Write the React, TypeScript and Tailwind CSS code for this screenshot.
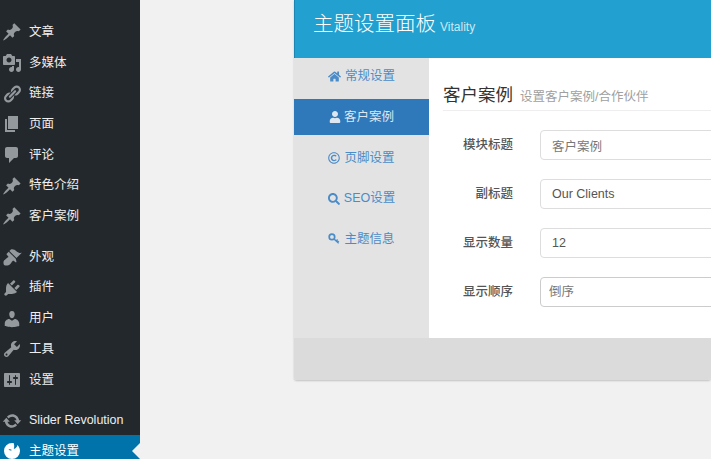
import { FaHome, FaUser, FaRegCopyright, FaSearch } from "react-icons/fa"

const pin = "M10.44 3.02l1.82-1.82 6.36 6.35-1.83 1.82c-1.05-.68-2.48-.57-3.41.36l-.75.75c-.92.93-1.04 2.35-.35 3.41l-1.83 1.82-2.41-2.41-2.8 2.79c-.42.42-3.38 2.71-3.8 2.29s1.86-3.39 2.28-3.81l2.79-2.79L4.1 9.36l1.83-1.82c1.05.69 2.48.57 3.4-.36l.75-.75c.93-.92 1.05-2.35.36-3.41z"

const menuGroups = [
  [
    { label: "文章", d: pin },
    { label: "多媒体", d: "M13 11V4c0-.55-.45-1-1-1h-1.67L9 1H5L3.67 3H2c-.55 0-1 .45-1 1v7c0 .55.45 1 1 1h10c.55 0 1-.45 1-1zM7 4.5c1.38 0 2.5 1.12 2.5 2.5S8.38 9.5 7 9.5 4.5 8.38 4.5 7 5.62 4.5 7 4.5zM14 6h5v10.5c0 1.38-1.12 2.5-2.5 2.5S14 17.88 14 16.5s1.12-2.5 2.5-2.5c.17 0 .34.02.5.05V9h-3V6zm-4 8.05V13h2v3.5c0 1.38-1.12 2.5-2.5 2.5S7 17.88 7 16.5 8.12 14 9.5 14c.17 0 .34.02.5.05z" },
    { label: "链接", d: "M17.74 2.76c1.68 1.69 1.68 4.41 0 6.1l-1.53 1.52c-1.12 1.12-2.7 1.47-4.14 1.09l2.62-2.61.76-.77.76-.76c.84-.84.84-2.2 0-3.04-.84-.85-2.2-.85-3.04 0l-.77.76-3.38 3.38c-.37-1.44-.02-3.02 1.1-4.14l1.52-1.53c1.69-1.68 4.42-1.68 6.1 0zM8.59 13.43l5.34-5.34c.42-.42.42-1.1 0-1.52-.44-.43-1.13-.39-1.53 0l-5.33 5.34c-.42.42-.42 1.1 0 1.52.44.43 1.13.39 1.52 0zm-.76 2.29l4.14-4.15c.38 1.44.03 3.02-1.09 4.14l-1.52 1.53c-1.69 1.68-4.41 1.68-6.1 0-1.68-1.68-1.68-4.42 0-6.1l1.53-1.52c1.12-1.12 2.7-1.47 4.14-1.1l-4.14 4.15c-.85.84-.85 2.2 0 3.05.84.84 2.2.84 3.04 0z" },
    { label: "页面", d: "M6 15V2h10v13H6zm-1 1h8v2H3V5h2v11z" },
    { label: "评论", d: "M5 2h9c1.1 0 2 .9 2 2v7c0 1.1-.9 2-2 2h-2l-5 5v-5H5c-1.1 0-2-.9-2-2V4c0-1.1.9-2 2-2z" },
    { label: "特色介绍", d: pin },
    { label: "客户案例", d: pin },
  ],
  [
    { label: "外观", d: "M14.48 11.06L7.41 3.99l1.5-1.5c.5-.56 2.3-.47 3.51.32 1.21.8 1.43 1.28 2.91 2.1 1.18.64 2.45 1.26 4.45.85zm-.71.71L6.7 4.7 4.93 6.47c-.39.39-.39 1.02 0 1.41l1.06 1.06c.39.39.39 1.03 0 1.42-.6.6-1.43 1.11-2.21 1.69-.35.26-.7.53-1.01.84C1.43 13.23.99 15.9 2 18c2.1 1.01 4.77.57 6.11-.77.31-.31.58-.66.84-1.01.58-.78 1.09-1.61 1.69-2.21.39-.39 1.03-.39 1.42 0l1.06 1.06c.39.39 1.02.39 1.41 0z" },
    { label: "插件", d: "M13.11 4.36L9.87 7.6 8 5.73l3.24-3.24c.35-.34 1.05-.2 1.56.32.52.51.66 1.21.31 1.55zm-8 1.77l.91-1.12 9.01 9.01-1.19.84c-.71.71-2.63 1.16-3.82 1.16H6.14L4.9 17.26c-.59.59-1.54.59-2.12 0-.59-.58-.59-1.53 0-2.12l1.24-1.24v-3.88c0-1.13.4-3.19 1.09-3.89zm7.26 3.97l3.24-3.24c.34-.35 1.04-.21 1.55.31.52.51.66 1.21.31 1.55l-3.24 3.25z" },
    { label: "用户", d: "M10 9.25c-2.27 0-2.73-3.44-2.73-3.44C7 4.02 7.82 2 9.97 2c2.16 0 2.98 2.02 2.71 3.81 0 0-.41 3.44-2.68 3.44zm0 2.57L12.72 10c2.39 0 4.52 2.33 4.52 4.53v2.49s-3.65 1.13-7.24 1.13c-3.65 0-7.24-1.13-7.24-1.13v-2.49c0-2.25 1.94-4.48 4.47-4.48z" },
    { label: "工具", d: "M16.68 9.77c-1.34 1.34-3.3 1.67-4.95.99l-5.41 6.52c-.99.99-2.59.99-3.58 0s-.99-2.59 0-3.57l6.52-5.42c-.68-1.65-.35-3.61.99-4.95 1.28-1.28 3.12-1.62 4.72-1.06l-2.89 2.89 2.82 2.82 2.86-2.87c.53 1.58.18 3.39-1.08 4.65zM3.81 16.21c.4.39 1.04.39 1.43 0 .4-.4.4-1.04 0-1.43-.39-.4-1.03-.4-1.43 0-.39.39-.39 1.03 0 1.43z" },
    { label: "设置", d: "M18 16V4c0-.55-.45-1-1-1H3c-.55 0-1 .45-1 1v12c0 .55.45 1 1 1h14c.55 0 1-.45 1-1zM8 11h1c.55 0 1 .45 1 1s-.45 1-1 1H8v1.5c0 .28-.22.5-.5.5s-.5-.22-.5-.5V13H6c-.55 0-1-.45-1-1s.45-1 1-1h1V5.5c0-.28.22-.5.5-.5s.5.22.5.5V11zm5-2h-1c-.55 0-1-.45-1-1s.45-1 1-1h1V5.5c0-.28.22-.5.5-.5s.5.22.5.5V7h1c.55 0 1 .45 1 1s-.45 1-1 1h-1v5.5c0 .28-.22.5-.5.5s-.5-.22-.5-.5V9z" },
  ],
]

function KeyIcon() {
  return (
    <svg viewBox="0 0 14 14" className="h-[12px] w-[12px] fill-none stroke-current">
      <circle cx="4.6" cy="4.6" r="3.2" strokeWidth="2" />
      <path d="M7 7l5.500 5M9.500 9.300l1.800-1.600M11 11l1.600-1.400" strokeWidth="1.800" />
    </svg>
  )
}

const tabs = [
  { label: "常规设置", icon: <FaHome size={13} /> },
  { label: "客户案例", icon: <FaUser size={12} />, active: true },
  { label: "页脚设置", icon: <FaRegCopyright size={12} /> },
  { label: "SEO设置", icon: <FaSearch size={12} /> },
  { label: "主题信息", icon: <KeyIcon /> },
]

function MenuIcon({ d }: { d: string }) {
  return (
    <svg viewBox="0 0 20 20" className="h-[20px] w-[20px] shrink-0 fill-[#94999e]">
      <path d={d} />
    </svg>
  )
}

function MenuRow({ label, d }: { label: string; d: string }) {
  return (
    <div className="flex h-[30.7px] items-center pl-[2px] pt-[2px] text-[12.5px] text-[#eeeeee]">
      <MenuIcon d={d} />
      <span className="ml-[7px]">{label}</span>
    </div>
  )
}

function Field({ label, children }: { label: string; children: React.ReactNode }) {
  return (
    <div className="flex h-[30px] items-center">
      <label className="w-[70px] shrink-0 text-right text-[12.5px] font-medium text-[#555555]">{label}</label>
      <div className="ml-[27px] shrink-0">{children}</div>
    </div>
  )
}

const inputClass =
  "h-[30px] w-[300px] rounded-[4px] border border-[#dddddd] bg-white px-[11px] text-[12.5px] outline-none"

export default function App() {
  return (
    <div
      className="flex h-[459px] w-[711px] overflow-hidden bg-[#f1f1f1]"
      style={{ fontFamily: '"Liberation Sans", "Noto Sans CJK SC", sans-serif' }}
    >
      {/* admin menu */}
      <div className="w-[140px] shrink-0 bg-[#23282d] pt-[16px]">
        {menuGroups.map((group, i) => (
          <div key={i} className="mb-[10px]">
            {group.map((item) => (
              <MenuRow key={item.label} label={item.label} d={item.d} />
            ))}
          </div>
        ))}
        <MenuRow
          label="Slider Revolution"
          d="M10.2 3.28c3.53 0 6.43 2.61 6.92 6h2.08l-3.5 4-3.5-4h2.32c-.45-1.97-2.21-3.45-4.32-3.45-1.45 0-2.73.71-3.54 1.78L4.95 5.66C6.23 4.2 8.11 3.28 10.2 3.28zm-.4 13.44c-3.52 0-6.43-2.61-6.92-6H.8l3.5-4c1.17 1.33 2.33 2.67 3.5 4H5.48c.45 1.97 2.21 3.45 4.32 3.45 1.45 0 2.73-.71 3.54-1.78l1.71 1.95c-1.28 1.46-3.15 2.38-5.25 2.38z"
        />
        <div className="relative flex h-[30px] items-center bg-[#0073aa] pl-[2px] pt-[2px] text-[12.5px] text-white">
          <svg viewBox="0 0 20 20" className="h-[20px] w-[20px] shrink-0 fill-white">
            <path d="M10 2a8 8 0 1 0 8 8c0-2.4-1-4.500-2.600-6-.3 2-1.600 3.600-3.600 3.900.6-1.600.6-3.600-.2-5.800C11 2 10.500 2 10 2zM6.500 8.500c1.300-.5 2.800-.2 3.500.8-1.200.3-2.500.2-3.500-.8z" />
          </svg>
          <span className="ml-[7px]">主题设置</span>
          <div className="absolute right-0 top-[8px] h-0 w-0 border-y-[8px] border-r-[8px] border-y-transparent border-r-[#f1f1f1]" />
        </div>
      </div>

      {/* settings panel */}
      <div className="ml-[154px] h-[380px] flex-1 overflow-hidden rounded-b-[3px] shadow-[0_1px_2px_rgba(0,0,0,0.2)]">
        <div className="flex h-[58px] items-center border-l border-[#1b86b4] bg-[#22a0d0] pb-[9px] pl-[18px] text-white">
          <span className="text-[20.5px] font-light">主题设置面板</span>
          <span className="ml-[4px] mt-[4px] text-[12px] text-[#cde8f3]">Vitality</span>
        </div>

        <div className="flex h-[280px]">
          <div className="flex w-[135px] shrink-0 flex-col gap-[4.7px] bg-[#e3e3e3] text-[12.5px]">
            {tabs.map((tab) => (
              <div
                key={tab.label}
                className={
                  tab.active
                    ? "flex h-[36px] shrink-0 items-center justify-center gap-[3px] bg-[#2f78ba] pt-[1px] text-[#dce7f2]"
                    : "flex h-[36px] shrink-0 items-center justify-center gap-[4px] pt-[1px] text-[#4b8cc8]"
                }
              >
                {tab.icon}
                <span>{tab.label}</span>
              </div>
            ))}
          </div>

          <div className="min-w-0 flex-1 overflow-hidden bg-white pl-[14px] pt-[25px]">
            <div className="flex h-[28px] items-center border-b border-[#eeeeee] pb-[2px]">
              <span className="text-[17.5px] text-[#333333]">客户案例</span>
              <span className="ml-[7px] mt-[3px] text-[12.5px] text-[#a0a0a0]">设置客户案例/合作伙伴</span>
            </div>
            <div className="mt-[19px] flex flex-col gap-[19px]">
              <Field label="模块标题">
                <input className={inputClass + " text-[#777777]"} defaultValue="客户案例" />
              </Field>
              <Field label="副标题">
                <input className={inputClass + " text-[#555555]"} defaultValue="Our Clients" />
              </Field>
              <Field label="显示数量">
                <input className={inputClass + " text-[#555555]"} defaultValue="12" />
              </Field>
              <Field label="显示顺序">
                <select className="h-[30px] w-[300px] appearance-none rounded-[4px] border border-[#cccccc] bg-white px-[8px] text-[12.5px] text-[#777777] outline-none">
                  <option>倒序</option>
                </select>
              </Field>
            </div>
          </div>
        </div>

        <div className="h-[42px] bg-[#dbdbdb]" />
      </div>
    </div>
  )
}
